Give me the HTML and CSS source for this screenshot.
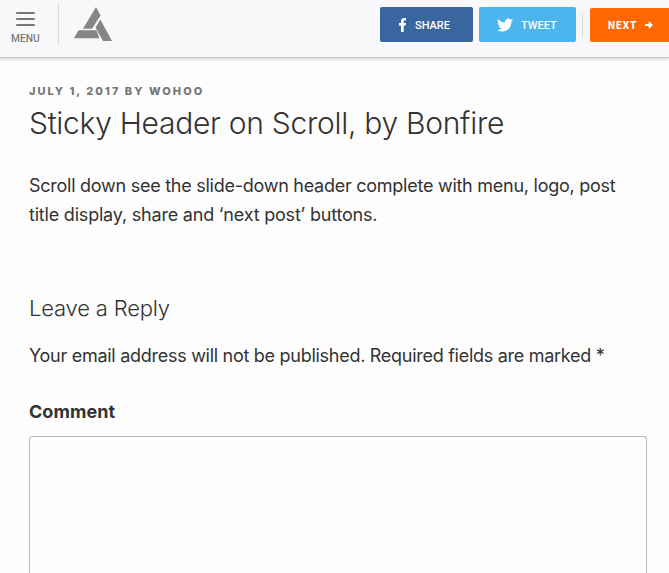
FILE: index.html
```html
<!DOCTYPE html>
<html lang="en">

<head>
    <meta charset="UTF-8" />
    <meta name="viewport" content="width=device-width, initial-scale=1.0" />
    <title>Sticky Header on Scroll, by Bonfire</title>
    <link rel="stylesheet" href="styles.css">
</head>

<body>
    <header class="sticky-header">
        <div class="menu-button">
            <div class="menu-bars"><span></span><span></span><span></span></div>
            <div class="menu-label">MENU</div>
        </div>
        <div class="divider"></div>
        <a class="logo" href="#">
            <svg width="38" height="34" viewBox="0 0 38 34">
                <path d="M22 0L26.500 8.500L18 21.800H9Z M4.500 23.300H22.500L25.500 31.300H0Z M26.300 12.500L38 34H29L21.500 20.500Z" fill="#858585" />
            </svg>
        </a>
        <div class="share-buttons">
            <a class="button share" href="#">
                <svg width="7" height="14" viewBox="0 0 7 14">
                    <path d="M2 14V7.5H0V5H2V3.4C2 1.1 3.2 0 5.1 0H7V2.4H5.7C5 2.4 4.7 2.8 4.7 3.5V5H7L6.7 7.5H4.7V14Z" fill="#fff" />
                </svg>
                <span>SHARE</span>
            </a>
            <a class="button tweet" href="#">
                <svg width="16" height="14" viewBox="0 0 24 20">
                    <path d="M24 2.4a10 10 0 0 1-2.8.8A5 5 0 0 0 23.3.5a10 10 0 0 1-3.1 1.2A5 5 0 0 0 11.8 6.2 14 14 0 0 1 1.7 1a5 5 0 0 0 1.5 6.6A5 5 0 0 1 1 7a5 5 0 0 0 3.9 4.800 5 5 0 0 1-2.2.1 5 5 0 0 0 4.6 3.4A10 10 0 0 1 0 17.400 14 14 0 0 0 21.500 5a10 10 0 0 0 2.500-2.600Z" fill="#fff" />
                </svg>
                <span>TWEET</span>
            </a>
        </div>
        <div class="divider small"></div>
        <a class="button next" href="#">
            <span>NEXT</span>
            <svg width="8" height="8" viewBox="0 0 8 8">
                <path d="M0 4H6.5M3.8 1.2L6.6 4L3.8 6.8" fill="none" stroke="#fff" stroke-width="1.900" />
            </svg>
        </a>
    </header>

    <main class="content">
        <div class="entry-meta">JULY 1, 2017 BY WOHOO</div>
        <h1 class="entry-title">Sticky Header on Scroll, by Bonfire</h1>
        <p class="entry-text">Scroll down see the slide-down header complete with menu, logo, post<br>
            <span class="line-two">title display, share and ‘next post’ buttons.</span></p>

        <h2 class="reply-title">Leave a Reply</h2>
        <p class="reply-notes">Your email address will not be published. Required fields are marked *</p>
        <label class="comment-label" for="comment">Comment</label>
        <textarea class="comment-box" id="comment"></textarea>
    </main>
</body>

</html>
```
FILE: styles.css
```css
* {
    box-sizing: border-box;
}

body {
    display: flex;
    flex-direction: column;
    margin: 0;
    height: 573px;
    overflow: hidden;
    background-color: #fdfdfd;
    color: #333;
    font-family: Inter, "Liberation Sans", sans-serif;
}

.sticky-header {
    display: flex;
    flex-shrink: 0;
    align-items: flex-start;
    height: 58px;
    background-color: #f8f8fa;
    border-bottom: 1px solid #c4c6c8;
    box-shadow: 0 1px 3px rgba(0, 0, 0, 0.2);
}

.menu-button {
    width: 58px;
    padding: 12px 0 0 11px;
}

.menu-bars {
    display: flex;
    flex-direction: column;
    gap: 4px;
    width: 19px;
    margin-left: 5px;
}

.menu-bars span {
    height: 2px;
    background-color: #777;
    border-radius: 1px;
}

.menu-label {
    margin-top: 7px;
    font: 500 10.2px/12px Roboto, sans-serif;
    color: #7d7d7d;
}

.divider {
    width: 1px;
    height: 40px;
    margin-top: 4px;
    background-color: #d8d9dc;
}

.divider.small {
    height: 24px;
    margin: 13px 7px 0 6px;
}

.logo {
    margin: 7px 0 0 15px;
}

.logo svg {
    display: block;
}

.share-buttons {
    display: flex;
    gap: 6px;
    margin-left: auto;
}

.button {
    display: flex;
    align-items: center;
    height: 35px;
    margin-top: 7px;
    border-radius: 2px;
    color: #fff;
    text-decoration: none;
    font: 500 11px/14px Roboto, sans-serif;
}

.button span {
    position: relative;
    top: 1px;
}

.share {
    width: 93px;
    padding-left: 19px;
    gap: 9px;
    background-color: #3a66a0;
}

.tweet {
    width: 97px;
    padding-left: 18px;
    gap: 8px;
    background-color: #4db5ee;
}

.next {
    width: 79px;
    height: 34px;
    margin-top: 8px;
    padding-left: 18px;
    gap: 8px;
    background-color: #ff6801;
    border-radius: 2px 0 0 2px;
    font-size: 10px;
    font-weight: 800;
    letter-spacing: 1px;
}

.content {
    display: flex;
    flex: 1;
    flex-direction: column;
    min-height: 0;
    padding: 27px 22px 0 29px;
}

.entry-meta {
    font-size: 11px;
    line-height: 13px;
    font-weight: 800;
    letter-spacing: 2.05px;
    color: #767676;
}

.entry-title {
    margin: 4px 0 0;
    font-size: 30px;
    line-height: 42px;
    font-weight: 300;
    letter-spacing: -0.28px;
    white-space: nowrap;
}

.entry-text {
    margin: 27px 0 0;
    font-size: 18px;
    line-height: 29px;
    letter-spacing: -0.26px;
    white-space: nowrap;
}

.line-two {
    letter-spacing: -0.2px;
}

.reply-title {
    margin: 64px 0 0;
    font-size: 22px;
    line-height: 30px;
    font-weight: 300;
    letter-spacing: -0.18px;
}

.reply-notes {
    margin: 18px 0 0;
    font-size: 18px;
    line-height: 29px;
    letter-spacing: -0.28px;
    white-space: nowrap;
}

.comment-label {
    margin-top: 27px;
    font-size: 18px;
    line-height: 29px;
    font-weight: 700;
    letter-spacing: 0.05px;
}

/* runs off the bottom of the screen */
.comment-box {
    flex: 1;
    min-height: 0;
    margin-top: 10px;
    border: 1px solid #bbb;
    border-bottom: 0;
    border-radius: 3px 3px 0 0;
    background-color: #fdfdfd;
    resize: none;
}
```
